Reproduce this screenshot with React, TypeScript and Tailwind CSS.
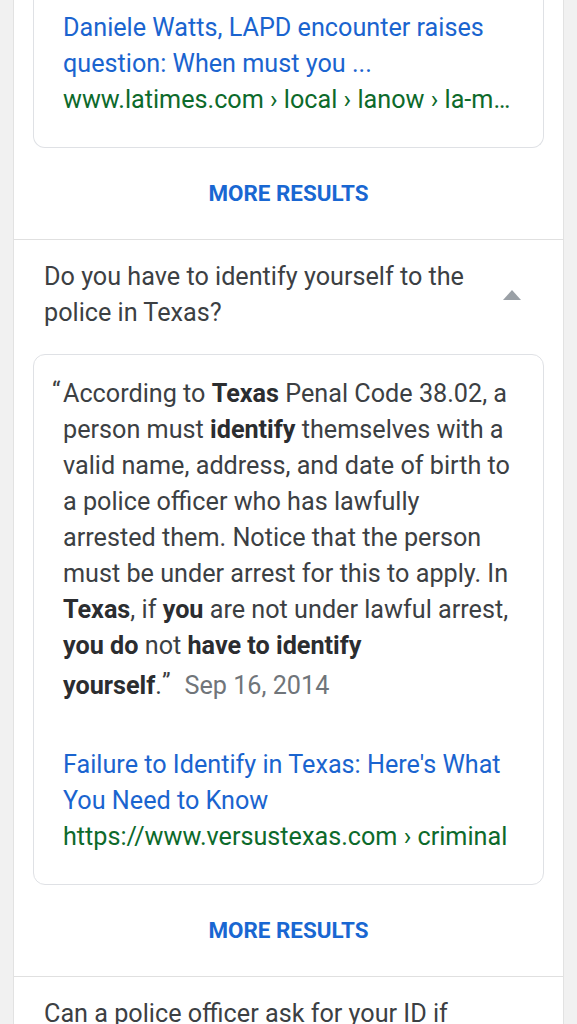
const FONT = "font-['Roboto','Liberation_Sans',sans-serif]";

function MoreResults() {
  return (
    <div className="flex h-[91px] items-center justify-center">
      <span className="text-[22.4px] font-bold text-[#1967d2]">MORE RESULTS</span>
    </div>
  );
}

function ResultLink({ title, url }: { title: React.ReactNode; url: string }) {
  return (
    <div className="text-[25.2px] leading-[36px]">
      <div className="text-[#1a64cf]">{title}</div>
      <div className="truncate whitespace-nowrap text-[#0d6a2b]">{url}</div>
    </div>
  );
}

export default function App() {
  return (
    <div className={`${FONT} min-h-[1024px] overflow-hidden bg-[#f1f1f1] px-[13px]`}>
      <div className="min-h-[1024px] border-x border-[#e2e2e2] bg-white">
        {/* first answer, scrolled so only its bottom shows */}
        <div className="mx-[19px] -mt-[21px] rounded-b-[12px] border border-t-0 border-[#dfe1e5] px-[29px] pb-[29px] pt-[31px]">
          <ResultLink
            title={
              <>
                Daniele Watts, LAPD encounter raises
                <br />
                question: When must you ...
              </>
            }
            url="www.latimes.com › local › lanow › la-me-ln-daniele-watts"
          />
        </div>
        <MoreResults />

        <div className="border-t border-[#e0e0e0]">
          <div className="flex items-center pl-[30px] pr-[42px] pt-[19px]">
            <div className="flex-1 text-[25.2px] leading-[36px] text-[#3c4043]">
              Do you have to identify yourself to the
              <br />
              police in Texas?
            </div>
            <svg width="18" height="10" viewBox="0 0 18 10" className="shrink-0">
              <path d="M9 0 L18 10 L0 10 Z" fill="#9aa0a6" />
            </svg>
          </div>

          <div className="mx-[19px] mt-[23px] rounded-[12px] border border-[#dfe1e5] px-[29px] pb-[29px] pt-[21px]">
            <p className="text-[25.2px] leading-[36px] text-[#3c4043]">
              <span className="relative -top-[3px] -ml-[11px] inline-block w-[11px] text-[24px]">“</span>
              According to <b className="text-[#2b2d30]">Texas</b> Penal Code 38.02, a
              <br />
              person must <b className="text-[#2b2d30]">identify</b> themselves with a
              <br />
              valid name, address, and date of birth to
              <br />
              a police officer who has lawfully
              <br />
              arrested them. Notice that the person
              <br />
              must be under arrest for this to apply. In
              <br />
              <b className="text-[#2b2d30]">Texas</b>, if <b className="text-[#2b2d30]">you</b> are not under lawful arrest,
              <br />
              <b className="text-[#2b2d30]">you do</b> not <b className="text-[#2b2d30]">have to identify</b>
              <br />
              <span className="inline-block pt-[4px]">
                <b className="text-[#2b2d30]">yourself</b>.
                <span className="relative -top-[4px] text-[24px]">”</span>
                <span className="ml-[14px] text-[#70757a]">Sep 16, 2014</span>
              </span>
            </p>
            <div className="mt-[43px]">
              <ResultLink
                title={
                  <>
                    Failure to Identify in Texas: Here's What
                    <br />
                    You Need to Know
                  </>
                }
                url="https://www.versustexas.com › criminal"
              />
            </div>
          </div>
          <MoreResults />
        </div>

        <div className="border-t border-[#e0e0e0] pl-[30px] pt-[19px]">
          <div className="text-[25.2px] leading-[36px] text-[#3c4043]">
            Can a police officer ask for your ID if
          </div>
        </div>
      </div>
    </div>
  );
}
